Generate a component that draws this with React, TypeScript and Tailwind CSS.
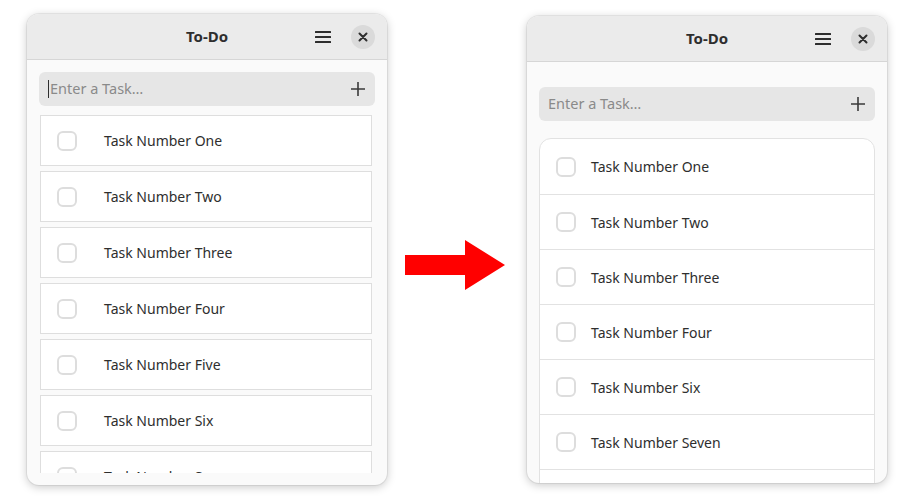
import React from "react";

const font = { fontFamily: '"Noto Sans", "Open Sans", sans-serif' };

function Header() {
  return (
    <div className="relative flex h-[46px] shrink-0 items-center justify-center border-b border-[#d6d6d6] bg-[#ebebeb]">
      <span className="text-[15px] font-bold text-[#2e2e2e]">To-Do</span>
      <div className="absolute right-[12px] top-0 flex h-full items-center gap-[16px]">
        <svg width="24" height="24" viewBox="0 0 24 24" className="text-[#2e2e2e]">
          <rect x="4" y="6" width="16" height="2" rx="0.5" fill="currentColor" />
          <rect x="4" y="11" width="16" height="2" rx="0.5" fill="currentColor" />
          <rect x="4" y="16" width="16" height="2" rx="0.5" fill="currentColor" />
        </svg>
        <div className="flex h-[24px] w-[24px] items-center justify-center rounded-full bg-[#dadada]">
          <svg width="10" height="10" viewBox="0 0 10 10">
            <path d="M1.5 1.5 L8.5 8.5 M8.5 1.5 L1.5 8.5" stroke="#2e2e2e" strokeWidth="2" strokeLinecap="round" />
          </svg>
        </div>
      </div>
    </div>
  );
}

function Entry({ caret }: { caret?: boolean }) {
  return (
    <div className="flex h-[34px] items-center rounded-[6px] bg-[#e6e6e6] pl-[9px] pr-[9px]">
      {caret && <span className="mr-[1px] h-[18px] w-[1px] bg-[#2e2e2e]" />}
      <span className="flex-1 text-[14.5px] text-[#8a8a8a]">Enter a Task…</span>
      <svg width="16" height="16" viewBox="0 0 16 16">
        <path d="M8 1 V15 M1 8 H15" stroke="#3a3a3a" strokeWidth="1.6" />
      </svg>
    </div>
  );
}

function Check() {
  return <div className="h-[20px] w-[20px] shrink-0 rounded-[6px] border-2 border-[#dddddd] bg-white" />;
}

const leftTasks = ["One", "Two", "Three", "Four", "Five", "Six", "Seven"];
const rightTasks = ["One", "Two", "Three", "Four", "Six", "Seven", "Eight"];

function LeftWindow() {
  return (
    <div className="flex h-[471px] w-[360px] shrink-0 flex-col overflow-hidden rounded-[12px] bg-[#fafafa] shadow-[0_0_0_1px_rgba(0,0,0,0.06),0_2px_10px_rgba(0,0,0,0.22)]">
      <Header />
      <div className="flex min-h-0 flex-1 flex-col px-[12px] pb-[12px] pt-[12px]">
        <Entry caret />
        <div className="mt-[9px] min-h-0 flex-1 overflow-hidden pl-[1px] pr-[3px]">
          <div className="flex flex-col gap-[5px]">
            {leftTasks.map((t) => (
              <div key={t} className="flex h-[51px] shrink-0 items-center border border-[#dedede] bg-white pl-[16px]">
                <Check />
                <span className="ml-[27px] text-[14px] text-[#2e2e2e]">Task Number {t}</span>
              </div>
            ))}
          </div>
        </div>
      </div>
    </div>
  );
}

function RightWindow() {
  return (
    <div className="mt-[2px] flex h-[467px] w-[360px] shrink-0 flex-col overflow-hidden rounded-[12px] bg-[#fafafa] shadow-[0_0_0_1px_rgba(0,0,0,0.06),0_2px_10px_rgba(0,0,0,0.22)]">
      <Header />
      <div className="flex min-h-0 flex-1 flex-col px-[12px] pt-[25px]">
        <Entry />
        <div className="mt-[17px] min-h-0 flex-1 overflow-hidden">
          <div className="flex flex-col overflow-hidden rounded-[12px] border border-[#e2e2e2] bg-white">
            {rightTasks.map((t, i) => (
              <div
                key={t}
                className={`flex h-[55px] shrink-0 items-center pl-[16px] ${i > 0 ? "border-t border-[#e2e2e2]" : ""}`}
              >
                <Check />
                <span className="ml-[15px] text-[14px] text-[#2e2e2e]">Task Number {t}</span>
              </div>
            ))}
          </div>
        </div>
      </div>
    </div>
  );
}

function Arrow() {
  return (
    <svg width="100" height="50" viewBox="0 0 100 50" className="ml-[18px] mr-[22px] mt-[226px] shrink-0">
      <polygon points="0,15 60,15 60,0 100,25 60,50 60,35 0,35" fill="#ff0000" />
    </svg>
  );
}

export default function App() {
  return (
    <div className="h-[500px] w-[910px] overflow-hidden bg-white" style={font}>
      <div className="flex items-start pl-[27px] pt-[14px]">
        <LeftWindow />
        <Arrow />
        <RightWindow />
      </div>
    </div>
  );
}
